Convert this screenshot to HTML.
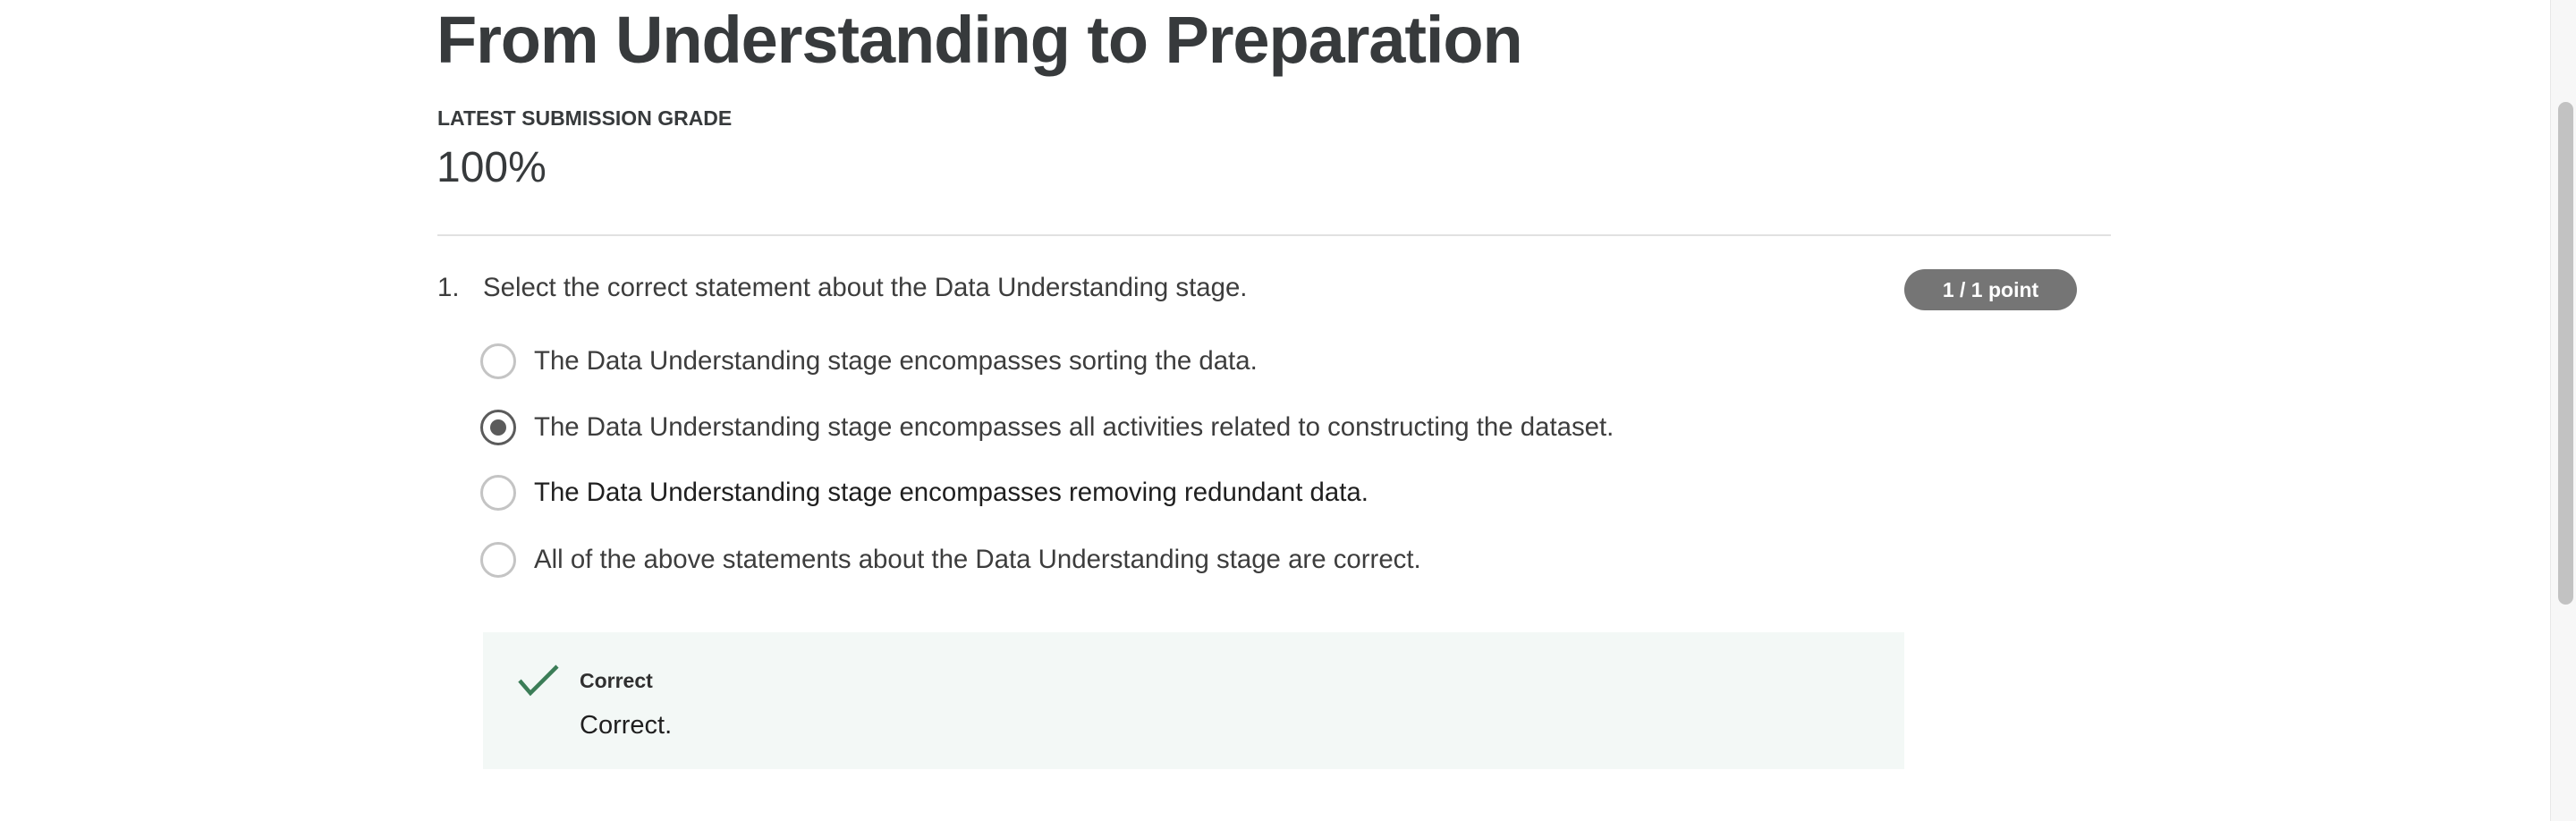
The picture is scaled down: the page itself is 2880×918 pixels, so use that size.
<!DOCTYPE html>
<html><head><meta charset="utf-8"><style>
html,body{margin:0;padding:0;width:2880px;height:918px;overflow:hidden;background:#fff;font-family:"Liberation Sans",sans-serif;color:#373a3c;}
.a{position:absolute;white-space:nowrap;}
h1{position:absolute;left:488px;top:2px;margin:0;font-size:74px;font-weight:bold;color:#373a3c;letter-spacing:-1.1px;}
.radio{position:absolute;left:537px;width:34px;height:34px;border:3.5px solid #c4c4c4;border-radius:50%;}
.opt{position:absolute;left:597px;font-size:29.4px;color:#3d3d3d;}
</style></head><body>
<h1>From Understanding to Preparation</h1>
<div class="a" style="left:489px;top:119px;font-size:23px;font-weight:bold;color:#373a3c;">LATEST SUBMISSION GRADE</div>
<div class="a" style="left:488px;top:160px;font-size:48px;color:#373a3c;">100%</div>
<div class="a" style="left:489px;top:262px;width:1871px;height:2px;background:#e1e1e1;"></div>
<div class="a" style="left:489px;top:305px;font-size:29.4px;color:#3d3d3d;">1.</div>
<div class="a" style="left:540px;top:305px;font-size:29.4px;color:#3d3d3d;">Select the correct statement about the Data Understanding stage.</div>
<div class="a" style="left:2129px;top:301px;width:193px;height:46px;border-radius:23px;background:#757575;color:#fff;font-size:23px;font-weight:bold;text-align:center;line-height:46px;">1 / 1 point</div>

<div class="radio" style="top:384px;"></div>
<div class="opt" style="top:387px;">The Data Understanding stage encompasses sorting the data.</div>
<div class="radio" style="top:458px;border-color:#5b5b5b;"><div style="position:absolute;left:8px;top:8px;width:18px;height:18px;border-radius:50%;background:#5b5b5b;"></div></div>
<div class="opt" style="top:461px;">The Data Understanding stage encompasses all activities related to constructing the dataset.</div>
<div class="radio" style="top:531px;"></div>
<div class="opt" style="top:534px;color:#1f1f1f;">The Data Understanding stage encompasses removing redundant data.</div>
<div class="radio" style="top:606px;"></div>
<div class="opt" style="top:609px;">All of the above statements about the Data Understanding stage are correct.</div>

<div class="a" style="left:540px;top:707px;width:1589px;height:153px;background:#f3f8f6;"></div>
<svg class="a" style="left:578px;top:742px;" width="50" height="38" viewBox="0 0 50 38"><path d="M3 19 L15 33 L45 3" fill="none" stroke="#3b7d57" stroke-width="4.5"/></svg>
<div class="a" style="left:648px;top:748px;font-size:23px;font-weight:bold;color:#2f2f2f;">Correct</div>
<div class="a" style="left:648px;top:795px;font-size:29px;color:#1f1f1f;">Correct.</div>

<div class="a" style="left:2851px;top:0;width:29px;height:918px;background:#f7f7f7;border-left:1px solid #e8e8e8;"></div>
<div class="a" style="left:2860px;top:114px;width:17px;height:562px;border-radius:9px;background:#c2c2c2;"></div>
</body></html>
